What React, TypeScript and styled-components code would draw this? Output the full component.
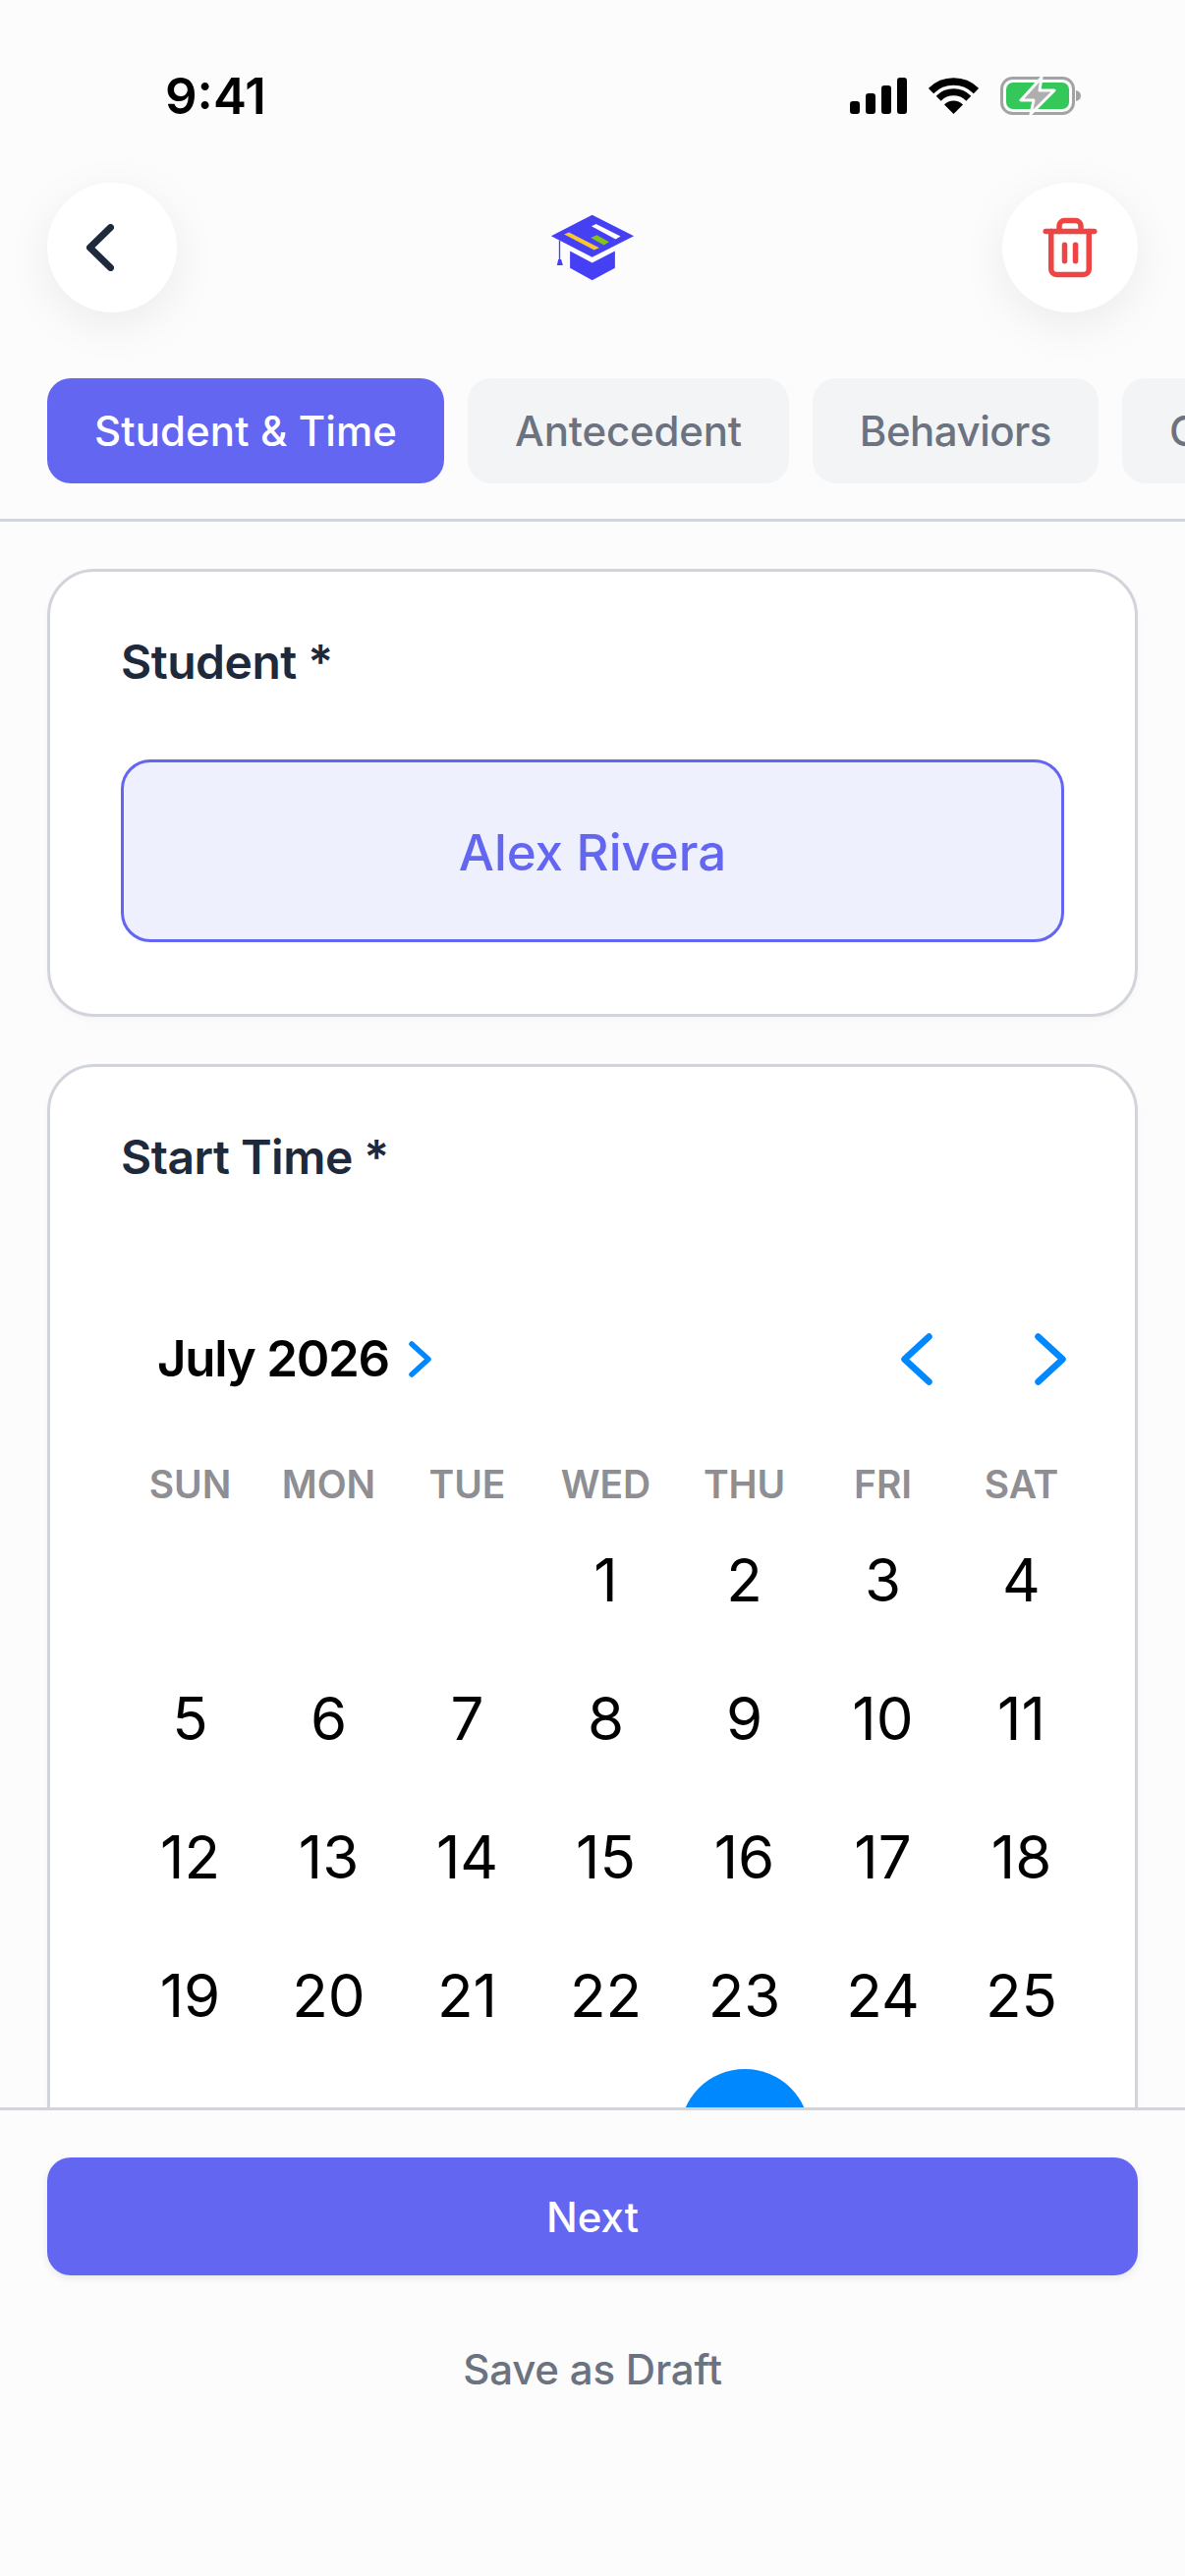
import React from 'react';
import styled, { createGlobalStyle } from 'styled-components';

const GlobalStyle = createGlobalStyle`
  html, body {
    margin: 0;
    padding: 0;
    background: #fcfcfc;
  }

  * {
    box-sizing: border-box;
  }
`;

const tabs = [
  { label: 'Student & Time', tracking: 0.1 },
  { label: 'Antecedent', tracking: -0.2 },
  { label: 'Behaviors', tracking: -0.5 },
  { label: 'Consequence', tracking: 0 },
];
const weekDays = ['SUN', 'MON', 'TUE', 'WED', 'THU', 'FRI', 'SAT'];
const leadingBlanks = 3;
const selectedDay = 30;
const days = Array.from({ length: 31 }, (_, i) => i + 1);

const App = () => {
  return (
    <StScreen>
      <GlobalStyle />
      <StStatusBar>
        <StClock>9:41</StClock>
        <StStatusIcons>
          <svg width="58" height="37" viewBox="0 0 58 37">
            <rect x="0" y="24" width="10" height="13" rx="3" />
            <rect x="16" y="16" width="10" height="21" rx="3" />
            <rect x="32" y="8" width="10" height="29" rx="3" />
            <rect x="48" y="0" width="10" height="37" rx="3" />
          </svg>
          <svg width="51" height="37" viewBox="0 0 51 37">
            <path d="M2.5 13.5A32.5 32.5 0 0 1 48.5 13.5" fill="none" stroke="#000" strokeWidth="7.5" />
            <path d="M10.2 21.2A21.6 21.6 0 0 1 40.8 21.2" fill="none" stroke="#000" strokeWidth="7" />
            <path d="M25.5 37L16 27.5A13.4 13.4 0 0 1 35 27.5Z" />
          </svg>
          <svg width="82" height="39" viewBox="0 0 82 39">
            <rect x="1.5" y="1.5" width="73" height="36" rx="11" fill="none" stroke="#a3a3a3" strokeWidth="3" />
            <rect x="6" y="6" width="64" height="27" rx="7" fill="#34c759" />
            <path d="M77 14C80 14.500 82 16.500 82 19.500C82 22.500 80 24.500 77 25Z" fill="#a3a3a3" />
            <path
              d="M42 1L21 24H34L31 38L55 14H40Z"
              fill="#aeaeae"
              stroke="#fcfcfc"
              strokeWidth="3"
              strokeLinejoin="round"
            />
          </svg>
        </StStatusIcons>
      </StStatusBar>

      <StHeader>
        <StBackButton type="button" aria-label="Back">
          <svg width="28" height="48" viewBox="0 0 28 48" fill="none">
            <path d="M24.500 3.500L3.500 24L24.500 44.500" stroke="#1e293b" strokeWidth="7" strokeLinecap="round" strokeLinejoin="round" />
          </svg>
        </StBackButton>
        <StLogo>
          <svg width="86" height="68" viewBox="180 85 258 205">
            <path d="M182 152L308 87L436 152L308 217Z" fill="#4640f5" />
            <path d="M240 198L308 234L378 198V250L308 288L240 250Z" fill="#4640f5" />
            <path d="M306 122L320 115L395 153L380 162Z" fill="#fff" />
            <path d="M304 157L322 149L360 170L344 180Z" fill="#84c318" />
            <path d="M222 147L237 141L330 188L314 195Z" fill="#f9c72e" />
            <path d="M208 166V226" stroke="#4640f5" strokeWidth="4" />
            <path d="M204 224H213L218 242H200Z" fill="#4640f5" />
          </svg>
        </StLogo>
        <StDeleteButton type="button" aria-label="Delete">
          <svg width="66" height="66" viewBox="0 0 24 24" fill="none" stroke="#ef4444" strokeWidth="2" strokeLinecap="round" strokeLinejoin="round">
            <path d="M3 6h18" />
            <path d="M19 6v14a2 2 0 0 1-2 2H7a2 2 0 0 1-2-2V6" />
            <path d="M8 6V4a2 2 0 0 1 2-2h4a2 2 0 0 1 2 2v2" />
            <path d="M10 11v6" />
            <path d="M14 11v6" />
          </svg>
        </StDeleteButton>
      </StHeader>

      <StTabBar>
        {tabs.map((tab, index) => (
          <StTab key={tab.label} $active={index === 0} $tracking={tab.tracking}>
            {tab.label}
          </StTab>
        ))}
      </StTabBar>

      <StContent>
        <StCard>
          <StLabel>Student *</StLabel>
          <StStudentChip>Alex Rivera</StStudentChip>
        </StCard>

        <StCard>
          <StLabel>Start Time *</StLabel>
          <StCalendarHeader>
            <StMonthPicker>
              <StMonthTitle>July 2026</StMonthTitle>
              <svg width="23" height="37" viewBox="0 0 23 37" fill="none">
                <path d="M3 3L20 18.500L3 34" stroke="#0088ff" strokeWidth="5.500" strokeLinecap="round" strokeLinejoin="round" />
              </svg>
            </StMonthPicker>
            <StMonthNav>
              <svg width="32" height="53" viewBox="0 0 32 53" fill="none">
                <path d="M28.500 3.500L3.500 26.500L28.500 49.500" stroke="#0088ff" strokeWidth="6.500" strokeLinecap="round" strokeLinejoin="round" />
              </svg>
              <svg width="32" height="53" viewBox="0 0 32 53" fill="none">
                <path d="M3.500 3.500L28.500 26.500L3.500 49.500" stroke="#0088ff" strokeWidth="6.500" strokeLinecap="round" strokeLinejoin="round" />
              </svg>
            </StMonthNav>
          </StCalendarHeader>
          <StWeekRow>
            {weekDays.map((day) => (
              <StWeekDay key={day}>{day}</StWeekDay>
            ))}
          </StWeekRow>
          <StDayGrid>
            {Array.from({ length: leadingBlanks }, (_, i) => (
              <span key={i} />
            ))}
            {days.map((day) => (
              <StDayCell key={day}>
                <StDay $selected={day === selectedDay}>{day}</StDay>
              </StDayCell>
            ))}
          </StDayGrid>
        </StCard>
      </StContent>

      <StFooter>
        <StNextButton type="button">Next</StNextButton>
        <StDraftButton type="button">Save as Draft</StDraftButton>
      </StFooter>
    </StScreen>
  );
};

export default App;

const StScreen = styled.div`
  display: flex;
  flex-direction: column;

  width: 1206px;
  height: 2622px;
  overflow: hidden;

  background-color: #fcfcfc;
  font-family: Inter, 'Liberation Sans', sans-serif;
`;

const StStatusBar = styled.div`
  display: flex;
  flex-shrink: 0;
  justify-content: space-between;
  align-items: center;

  height: 117px;
  padding: 78px 106px 0 168px;
`;

const StClock = styled.span`
  color: #000;
  font-size: 51px;
  font-weight: 600;
  line-height: 39px;
`;

const StStatusIcons = styled.div`
  display: flex;
  align-items: center;
  gap: 22px;
`;

const StHeader = styled.div`
  display: grid;
  flex-shrink: 0;
  grid-template-columns: 1fr auto 1fr;
  align-items: center;

  margin-top: 69px;
  padding: 0 48px;
`;

const StRoundButton = styled.button`
  display: flex;
  justify-content: center;
  align-items: center;

  height: 132px;
  padding: 0;

  border: none;
  border-radius: 50%;
  background-color: #fff;
  box-shadow: 0 12px 48px rgba(0, 0, 0, 0.07);
`;

const StBackButton = styled(StRoundButton)`
  width: 132px;
  padding-right: 24px;
`;

const StDeleteButton = styled(StRoundButton)`
  justify-self: end;

  width: 138px;
`;

const StLogo = styled.div`
  display: flex;
`;

const StTabBar = styled.div`
  display: flex;
  flex-shrink: 0;
  gap: 24px;

  margin-top: 67px;
  padding: 0 0 36px 48px;
  overflow: hidden;

  border-bottom: 3px solid #d1d5db;
`;

const StTab = styled.div<{ $active: boolean; $tracking: number }>`
  flex-shrink: 0;

  padding: 0 48px;

  border-radius: 24px;
  background-color: ${({ $active }) => ($active ? '#6366f1' : '#f3f4f6')};
  color: ${({ $active }) => ($active ? '#fff' : '#6b7280')};
  font-size: 42px;
  font-weight: 500;
  letter-spacing: ${({ $tracking }) => $tracking}px;
  line-height: 107px;
`;

const StContent = styled.div`
  display: flex;
  flex: 1;
  flex-direction: column;
  gap: 48px;

  min-height: 0;
  padding: 48px 48px 0;
  overflow: hidden;
`;

const StCard = styled.section`
  flex-shrink: 0;

  padding: 62px 72px 73px;

  border: 3px solid #d1d5db;
  border-radius: 48px;
  background-color: #fff;
  box-shadow: 0 3px 6px rgba(0, 0, 0, 0.03);
`;

const StLabel = styled.h2`
  margin: 0;

  color: #1e293b;
  font-size: 48px;
  font-weight: 600;
  letter-spacing: -0.5px;
  line-height: 60px;
`;

const StStudentChip = styled.div`
  display: flex;
  justify-content: center;
  align-items: center;

  height: 186px;
  margin-top: 69px;
  padding-top: 2px;

  border: 3px solid #6366f1;
  border-radius: 30px;
  background-color: #eff0fd;
  color: #6366f1;
  font-size: 51px;
  font-weight: 500;
`;

const StCalendarHeader = styled.div`
  display: flex;
  justify-content: space-between;
  align-items: center;

  margin-top: 144px;
  margin-right: -2px;
  padding-left: 37px;
`;

const StMonthPicker = styled.div`
  display: flex;
  align-items: center;
  gap: 20px;
`;

const StMonthTitle = styled.span`
  color: #000;
  font-size: 51px;
  font-weight: 600;
  letter-spacing: -1.25px;
  line-height: 62px;
`;

const StMonthNav = styled.div`
  display: flex;
  gap: 104px;
`;

const StWeekRow = styled.div`
  display: grid;
  grid-template-columns: repeat(7, 141px);

  margin-top: 73px;
`;

const StWeekDay = styled.span`
  color: #8e8e93;
  font-size: 39px;
  font-weight: 600;
  letter-spacing: -0.1px;
  line-height: 48px;
  text-align: center;
`;

const StDayGrid = styled.div`
  display: grid;
  grid-template-columns: repeat(7, 141px);
  grid-auto-rows: 141px;

  margin-top: 2px;
`;

const StDayCell = styled.div`
  display: flex;
  justify-content: center;
  align-items: center;
`;

const StDay = styled.span<{ $selected: boolean }>`
  display: flex;
  justify-content: center;
  align-items: center;

  width: 132px;
  height: 132px;

  border-radius: 50%;
  background-color: ${({ $selected }) => ($selected ? '#0088ff' : 'transparent')};
  color: ${({ $selected }) => ($selected ? '#fff' : '#000')};
  font-size: 60px;
  font-weight: 400;
`;

const StFooter = styled.div`
  display: flex;
  flex-shrink: 0;
  flex-direction: column;
  align-items: center;

  height: 477px;
  padding: 48px 48px 0;

  border-top: 3px solid #d1d5db;
  background-color: #fcfcfc;
`;

const StNextButton = styled.button`
  width: 100%;
  height: 120px;

  border: none;
  border-radius: 24px;
  background-color: #6366f1;
  box-shadow: 0 3px 9px rgba(0, 0, 0, 0.08);
  color: #fff;
  font-family: inherit;
  font-size: 42px;
  font-weight: 500;
`;

const StDraftButton = styled.button`
  margin-top: 66px;
  padding: 0;

  border: none;
  background: none;
  color: #6b7280;
  font-family: inherit;
  font-size: 42px;
  font-weight: 500;
  letter-spacing: -0.2px;
  line-height: 60px;
`;
